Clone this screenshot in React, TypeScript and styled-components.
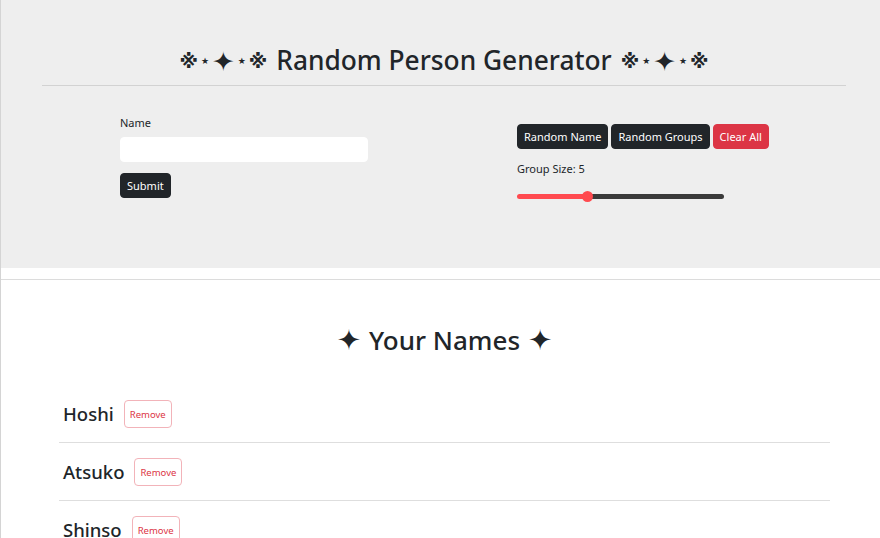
import React, { useState } from "react";
import styled, { createGlobalStyle } from "styled-components";

const Global = createGlobalStyle`
  html, body { margin: 0; padding: 0; background: #fff; }
  body {
    font-family: "Noto Sans", "DejaVu Sans", sans-serif;
    color: #212529;
  }
  * { box-sizing: border-box; }
`;

const Page = styled.div`
  border-left: 1px solid #d4d4d4;
  height: 538px;
  overflow: hidden;
`;

const Header = styled.header`
  background: #eeeeee;
  height: 268px;
  padding: 42px 34px 0 41px;
`;

const Title = styled.h1`
  margin: 0 0 7px;
  display: flex;
  justify-content: center;
  align-items: center;
  gap: 9px;
  font-size: 26.3px;
  font-weight: 500;
  line-height: 36px;
`;

const Deco = styled.span`
  font-family: "DejaVu Sans", sans-serif;
  font-weight: 700;
  display: inline-flex;
  align-items: center;
  gap: 3px;
  padding-top: 2px;
`;

const Glyph = styled.span<{ $size: number }>`
  font-size: ${(p) => p.$size}px;
  line-height: 1;
`;

const Rule = styled.hr`
  margin: 0;
  border: 0;
  border-top: 1px solid #d2d2d2;
`;

const FormRow = styled.div`
  display: grid;
  grid-template-columns: 397px 1fr;
  padding: 29px 0 0 78px;
`;

const Column = styled.div`
  display: flex;
  flex-direction: column;
  align-items: flex-start;
`;

const Label = styled.label`
  font-size: 11px;
  line-height: 16px;
  margin-bottom: 6px;
`;

const Input = styled.input`
  width: 248px;
  height: 25px;
  border: 1px solid #ffffff;
  border-radius: 4px;
  background: #fff;
  outline: none;
  margin-bottom: 11px;
`;

const Btn = styled.button<{ $danger?: boolean }>`
  height: 25px;
  padding: 0 6px;
  border: 1px solid ${(p) => (p.$danger ? "#dc3545" : "#212529")};
  background: ${(p) => (p.$danger ? "#dc3545" : "#212529")};
  color: #fff;
  border-radius: 4px;
  font-family: inherit;
  font-size: 11px;
  line-height: 1;
  cursor: pointer;
`;

const BtnGroup = styled.div`
  display: flex;
  gap: 3px;
  margin-top: 9px;
`;

const SizeText = styled.div`
  font-size: 11px;
  line-height: 16px;
  margin-top: 12px;
`;

const Range = styled.input`
  -webkit-appearance: none;
  appearance: none;
  width: 207px;
  height: 5px;
  border-radius: 3px;
  margin: 17px 0 0 0;
  outline: none;
  &::-webkit-slider-thumb {
    -webkit-appearance: none;
    width: 11px;
    height: 11px;
    border-radius: 50%;
    background: #ff4a4f;
    border: none;
  }
`;

const Gap = styled.div`
  height: 12px;
  border-bottom: 1px solid #dcdcdc;
`;

const NamesSection = styled.section`
  padding: 0 50px 0 58px;
`;

const NamesTitle = styled.h2`
  margin: 42px 0 27px;
  display: flex;
  justify-content: center;
  align-items: center;
  gap: 8px;
  font-size: 26px;
  font-weight: 500;
  line-height: 36px;
`;

const Star = styled.span`
  font-family: "DejaVu Sans", sans-serif;
  font-size: 29px;
  font-weight: 400;
  line-height: 1;
`;

const List = styled.ul`
  list-style: none;
  margin: 0;
  padding: 0;
`;

const Item = styled.li`
  display: flex;
  align-items: center;
  gap: 10px;
  padding: 15px 4px 14px;
  border-bottom: 1px solid #dedede;
`;

const Name = styled.span`
  font-size: 18.5px;
  font-weight: 500;
  line-height: 24px;
`;

const RemoveBtn = styled.button`
  height: 28px;
  padding: 0 5px;
  background: #fff;
  border: 1px solid #f2b3b9;
  border-radius: 4px;
  color: #dc3545;
  font-family: inherit;
  font-size: 9.5px;
  cursor: pointer;
`;

const names = ["Hoshi", "Atsuko", "Shinso"];

const Decoration = () => (
  <Deco>
    <Glyph $size={19}>※</Glyph>
    <Glyph $size={9}>★</Glyph>
    <Glyph $size={27}>✦</Glyph>
    <Glyph $size={9}>★</Glyph>
    <Glyph $size={19}>※</Glyph>
  </Deco>
);

export default function App() {
  const [size, setSize] = useState(5);
  const min = 2;
  const max = 11;
  const pct = ((size - min) / (max - min)) * 100;
  return (
    <>
      <Global />
      <Page>
        <Header>
          <Title>
            <Decoration />
            <span>Random Person Generator</span>
            <Decoration />
          </Title>
          <Rule />
          <FormRow>
            <Column>
              <Label htmlFor="name">Name</Label>
              <Input id="name" type="text" />
              <Btn>Submit</Btn>
            </Column>
            <Column>
              <BtnGroup>
                <Btn>Random Name</Btn>
                <Btn>Random Groups</Btn>
                <Btn $danger>Clear All</Btn>
              </BtnGroup>
              <SizeText>Group Size: {size}</SizeText>
              <Range
                type="range"
                min={min}
                max={max}
                value={size}
                onChange={(e) => setSize(Number(e.target.value))}
                style={{
                  background: `linear-gradient(to right, #ff4a4f 0%, #ff4a4f ${pct}%, #3a3a3a ${pct}%, #3a3a3a 100%)`,
                }}
              />
            </Column>
          </FormRow>
        </Header>
        <Gap />
        <NamesSection>
          <NamesTitle>
            <Star>✦</Star>
            <span>Your Names</span>
            <Star>✦</Star>
          </NamesTitle>
          <List>
            {names.map((n) => (
              <Item key={n}>
                <Name>{n}</Name>
                <RemoveBtn>Remove</RemoveBtn>
              </Item>
            ))}
          </List>
        </NamesSection>
      </Page>
    </>
  );
}
